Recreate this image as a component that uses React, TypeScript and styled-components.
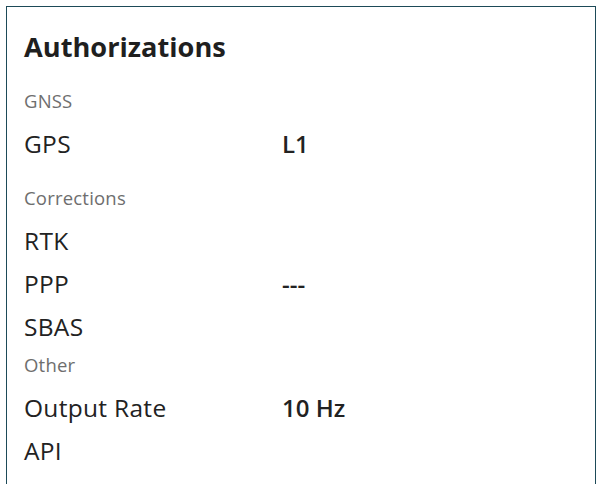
import React from "react";
import styled, { createGlobalStyle } from "styled-components";

const Global = createGlobalStyle`
  html, body { margin: 0; padding: 0; background: #ffffff; }
  body { font-family: "Open Sans", "Noto Sans", sans-serif; color: #222222; }
`;

const Card = styled.section`
  margin: 6px 0 0 6px;
  width: 590px;
  box-sizing: border-box;
  border: 1px solid #1d4a58;
  border-bottom: none;
  padding: 22px 0 20px 17px;
  min-height: 500px;
`;

const Title = styled.h2`
  margin: 0;
  font-size: 27.2px;
  line-height: 36px;
  font-weight: 700;
  color: #1f1f1f;
`;

const Group = styled.div<{ $top: number }>`
  margin-top: ${(p) => p.$top}px;
`;

const GroupLabel = styled.div`
  font-size: 18.5px;
  line-height: 24px;
  letter-spacing: 0.2px;
  margin-bottom: 9px;
  color: #6e6e6e;
`;

const Row = styled.div`
  display: grid;
  grid-template-columns: 258px 1fr;
  font-size: 24.5px;
  line-height: 43px;
  letter-spacing: 0.3px;
  color: #222222;
`;

const Value = styled.span`
  font-size: 24px;
  font-weight: 600;
  letter-spacing: 0;
`;

type Item = { label: string; value?: string };
const groups: { name: string; top: number; items: Item[] }[] = [
  { name: "GNSS", top: 23.5, items: [{ label: "GPS", value: "L1" }] },
  {
    name: "Corrections",
    top: 21,
    items: [{ label: "RTK" }, { label: "PPP", value: "---" }, { label: "SBAS" }],
  },
  {
    name: "Other",
    top: 5,
    items: [{ label: "Output Rate", value: "10 Hz" }, { label: "API" }],
  },
];

export default function App() {
  return (
    <>
      <Global />
      <Card>
        <Title>Authorizations</Title>
        {groups.map((g) => (
          <Group key={g.name} $top={g.top}>
            <GroupLabel>{g.name}</GroupLabel>
            {g.items.map((it) => (
              <Row key={it.label}>
                <span>{it.label}</span>
                <Value>{it.value ?? ""}</Value>
              </Row>
            ))}
          </Group>
        ))}
      </Card>
    </>
  );
}
